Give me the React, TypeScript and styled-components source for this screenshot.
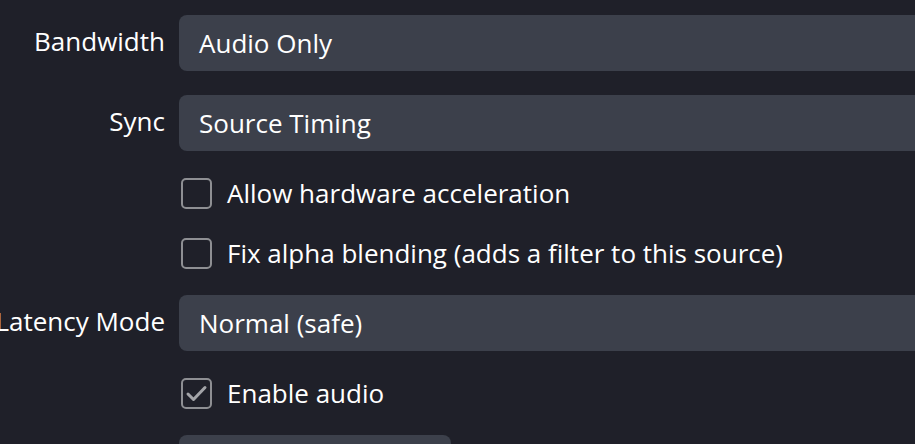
import React from "react";
import styled, { createGlobalStyle } from "styled-components";

const Global = createGlobalStyle`
  html, body { margin: 0; padding: 0; background: #1f2029; overflow: hidden; }
  body { font-family: "Open Sans", "Noto Sans", sans-serif; }
`;

const Form = styled.div`
  display: grid;
  grid-template-columns: 165px 1fr;
  grid-template-rows: 56px 56px 36px 36px 56px 36px 56px;
  column-gap: 14px;
  row-gap: 24px;
  padding-top: 15px;
  width: 915px;
  height: 444px;
  overflow: hidden;
  box-sizing: border-box;
  color: #ffffff;
  font-size: 26px;
`;

const Label = styled.div`
  grid-column: 1;
  align-self: center;
  justify-self: end;
  white-space: nowrap;
  margin-bottom: 5px;
  line-height: 1;
`;

const Select = styled.div<{ $width?: number }>`
  grid-column: 2;
  display: flex;
  align-items: center;
  background: #3c404b;
  border-radius: 8px;
  padding-left: 20px;
  margin-right: -12px;
  white-space: nowrap;
  ${(p) => (p.$width ? `width: ${p.$width}px; margin-right: 0; box-sizing: border-box;` : "")}
`;

const CheckRow = styled.label`
  grid-column: 2;
  display: flex;
  align-items: center;
  gap: 15px;
  padding-left: 2px;
  white-space: nowrap;
`;

const Box = styled.span`
  width: 31px;
  height: 31px;
  box-sizing: border-box;
  border: 2px solid #8e8f93;
  border-radius: 5px;
  display: flex;
  align-items: center;
  justify-content: center;
  flex-shrink: 0;
`;

const Check = ({ checked }: { checked?: boolean }) => (
  <Box>
    {checked && (
      <svg width="25" height="25" viewBox="0 0 25 25" fill="none">
        <path d="M4 13 L9.5 18.5 L21 6.5" stroke="#a3a4a8" strokeWidth="3" strokeLinecap="round" strokeLinejoin="round" />
      </svg>
    )}
  </Box>
);

export default function App() {
  return (
    <>
      <Global />
      <Form>
        <Label>Bandwidth</Label>
        <Select>Audio Only</Select>
        <Label>Sync</Label>
        <Select>Source Timing</Select>
        <CheckRow>
          <Check />
          Allow hardware acceleration
        </CheckRow>
        <CheckRow>
          <Check />
          Fix alpha blending (adds a filter to this source)
        </CheckRow>
        <Label>Latency Mode</Label>
        <Select>Normal (safe)</Select>
        <CheckRow>
          <Check checked />
          Enable audio
        </CheckRow>
        <Select $width={272} />
      </Form>
    </>
  );
}
